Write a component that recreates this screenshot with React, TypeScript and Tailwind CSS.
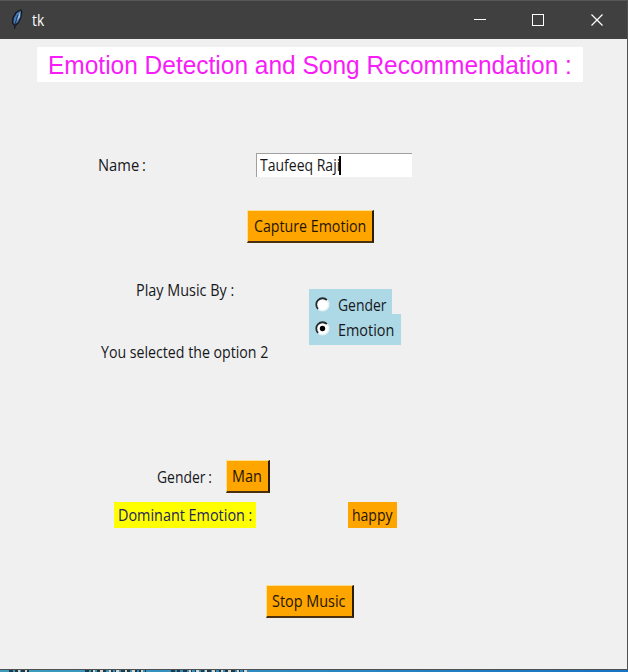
import type { ReactNode } from "react";

function Txt({
  children,
  className = "",
  fit = "scale-x-[0.9]",
}: {
  children: ReactNode;
  className?: string;
  fit?: string;
}) {
  return (
    <span className={`block origin-left text-[16px] leading-5 whitespace-pre ${fit} ${className}`}>
      {children}
    </span>
  );
}

function TkButton({ children, className = "" }: { children: ReactNode; className?: string }) {
  return (
    <button
      className={`flex h-[33px] items-center border-t border-r-2 border-b-2 border-l border-t-[#ffdf90] border-r-[#2a1c08] border-b-[#4a300c] border-l-[#ffdf90] bg-[#ffa500] text-[#241500] ${className}`}
    >
      {children}
    </button>
  );
}

function Radio({ checked = false }: { checked?: boolean }) {
  return (
    <svg width="15" height="15" viewBox="0 0 15 15" className="relative top-[-1px] shrink-0">
      <circle cx="7.5" cy="7.5" r="6" fill="#fff" />
      <path d="M3.1 12A6.2 6.2 0 0 1 12 3.1" fill="none" stroke="#222b2e" strokeWidth="1.8" />
      <path d="M12 3.1A6.2 6.2 0 0 1 3.1 12" fill="none" stroke="#e6f3f6" strokeWidth="1.4" />
      {checked && <circle cx="7.5" cy="7.5" r="2.7" fill="#000" />}
    </svg>
  );
}

function Feather() {
  return (
    <svg width="12" height="20" viewBox="0 0 12 20">
      <path d="M3 20L3.2 17L1 14.5L1.2 9L4.5 3L10 0L11.4 2.5L10.4 9L7.5 14.5L4.8 17L4 20Z" fill="#15191f" />
      <path d="M2.4 14L2.9 9L5.8 4L9.8 1.6L9.4 8L7 13L4.2 15.5Z" fill="#4779b5" />
      <path d="M5 12.5L9.4 2.5L9 8Z" fill="#9cc4ed" />
      <path d="M3.5 17L6.8 6" stroke="#17263c" strokeWidth="0.9" />
    </svg>
  );
}

export default function App() {
  return (
    <div className="flex h-[672px] w-[628px] flex-col overflow-hidden bg-[#f0f0f0] font-['Open_Sans','Noto_Sans',sans-serif] text-[#17171b]">
      <div className="flex h-[670px] flex-col border-r border-b border-[#505050]">
        <header className="flex h-[39px] shrink-0 items-center border-t border-[#585858] bg-[#404040] pl-[11px] text-white">
          <div className="pb-[2px]">
            <Feather />
          </div>
          <Txt className="ml-[9px]" fit="scale-x-[0.86]">tk</Txt>
          <svg className="mr-[23px] ml-auto" width="130" height="14" viewBox="0 0 130 14" fill="none" stroke="#fff">
            <path d="M0 6.5H12" />
            <rect x="58.5" y="1.5" width="11" height="11" />
            <path d="M117.5 1.5L128.5 12.5M128.5 1.5L117.5 12.5" strokeWidth="1.2" />
          </svg>
        </header>

        <main className="flex grow flex-col items-start">
          <h1 className="mt-2 ml-[37px] flex h-[35px] w-[546px] items-center bg-white pt-[2px] pl-[11px] font-['Liberation_Sans',Arial,sans-serif] text-[25.5px] whitespace-pre text-[#f81cf8]">
            <span className="block origin-left scale-x-[0.96]">Emotion Detection and Song Recommendation :</span>
          </h1>

          <div className="mt-[71px] flex h-6 items-center pl-[98px]">
            <div className="w-[158px]">
              <Txt className="[word-spacing:-1px]" fit="scale-x-[0.92]">Name :</Txt>
            </div>
            <div className="flex h-6 w-[156px] items-center border-t border-l border-[#a0a0a0] bg-white pl-[3px]">
              <div className="w-[79px] pb-[1px]">
                <Txt fit="scale-x-[0.875]">Taufeeq Raji</Txt>
              </div>
              <span className="h-[19px] w-[2px] bg-black" />
            </div>
          </div>

          <TkButton className="mt-[33px] ml-[247px] w-[127px] pl-[6px]">
            <Txt fit="scale-x-[0.888]">Capture Emotion</Txt>
          </TkButton>

          <div className="mt-[46px] flex h-14 items-start pl-[136px]">
            <div className="w-[173px]">
              <Txt className="mt-[-9px]" fit="scale-x-[0.9]">Play Music By :</Txt>
            </div>
            <div className="flex flex-col items-start">
              <label className="flex h-[25px] w-[83px] items-center gap-2 bg-[#add8e6] pt-[7px] pl-[6px]">
                <Radio />
                <Txt fit="scale-x-[0.87]">Gender</Txt>
              </label>
              <label className="flex h-[31px] w-[92px] items-center gap-2 bg-[#add8e6] pl-[6px]">
                <Radio checked />
                <Txt>Emotion</Txt>
              </label>
            </div>
          </div>

          <div className="mt-[-3px] ml-[101px]">
            <Txt fit="scale-x-[0.885]">You selected the option 2</Txt>
          </div>

          <div className="mt-[98px] flex h-[33px] items-center pl-[157px]">
            <div className="w-[69px]">
              <Txt className="[word-spacing:-1px]" fit="scale-x-[0.87]">Gender :</Txt>
            </div>
            <TkButton className="w-[44px] pl-[5px]">
              <Txt>Man</Txt>
            </TkButton>
          </div>

          <div className="mt-[9px] flex pl-[114px]">
            <div className="mr-[92px] flex h-[26px] w-[142px] items-center bg-[#ffff00] pl-1 text-[#24245c]">
              <Txt fit="scale-x-[0.9]">Dominant Emotion :</Txt>
            </div>
            <div className="flex h-[26px] w-[49px] items-center bg-[#ffa500] pl-1 text-[#241500]">
              <Txt fit="scale-x-[0.875]">happy</Txt>
            </div>
          </div>

          <TkButton className="mt-[57px] ml-[266px] w-[88px] pl-[5px]">
            <Txt fit="scale-x-[0.9]">Stop Music</Txt>
          </TkButton>
        </main>
      </div>
      <div className="h-[2px] bg-linear-to-r from-[#3d9dbd] to-[#1672c4]">
        <svg className="block" width="260" height="2" viewBox="0 0 260 2" strokeWidth="2">
          <path d="M9 1H29M85 1H146M171 1H249" stroke="#1f3a46" strokeDasharray="4 2 3 3" />
          <path d="M18 1H27M93 1H144M189 1H247" stroke="#d5d5cd" strokeDasharray="2 5 3 6" />
        </svg>
      </div>
    </div>
  );
}
